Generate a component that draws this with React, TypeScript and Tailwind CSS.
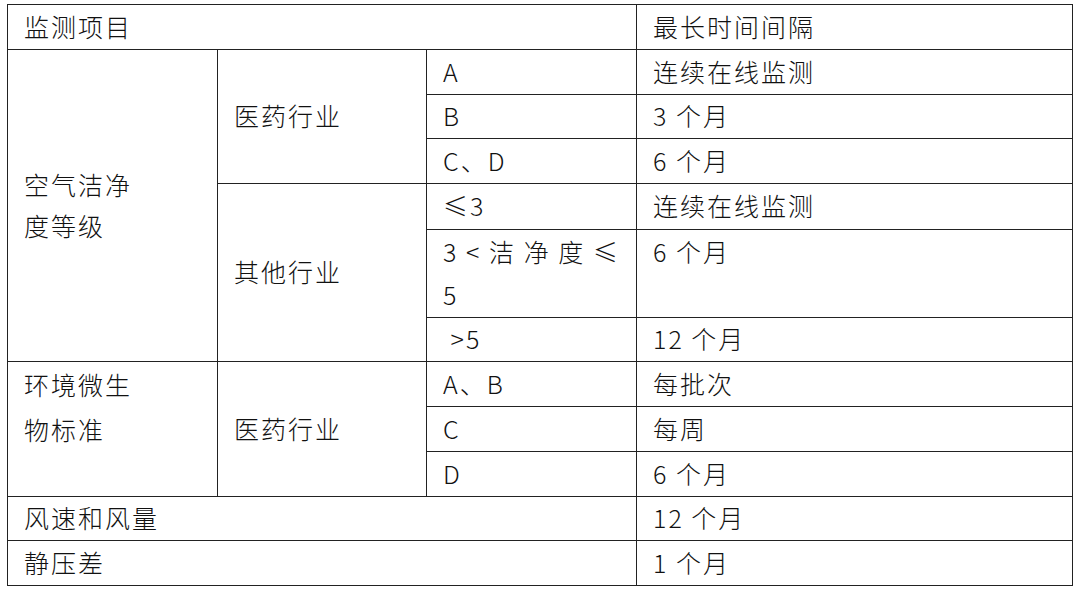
const font = { fontFamily: '"Noto Sans CJK SC", "Noto Sans", sans-serif' };

function Cell({
  className = '',
  children,
}: {
  className?: string;
  children?: React.ReactNode;
}) {
  return (
    <div className={`border-r border-b border-[#222] pl-[16px] pb-[2px] flex items-center ${className}`}>
      {children}
    </div>
  );
}

export default function App() {
  return (
    <div className="w-[1080px] h-[593px] bg-white pt-[4px] pl-[7px]" style={font}>
      <div className="grid w-max grid-cols-[210px_209px_210px_436px] grid-rows-[45px_45px_44px_45px_46px_88px_44px_45px_45px_45px_44px_45px] border-t border-l border-[#222] text-[25px] font-light tracking-[2px] text-[#111] leading-none">
        <Cell className="col-span-3">监测项目</Cell>
        <Cell>最长时间间隔</Cell>

        <Cell className="row-span-6 leading-[41px]">
          <div>
            空气洁净
            <br />
            度等级
          </div>
        </Cell>
        <Cell className="row-span-3">医药行业</Cell>
        <Cell>A</Cell>
        <Cell>连续在线监测</Cell>
        <Cell>B</Cell>
        <Cell>3 个月</Cell>
        <Cell>C、D</Cell>
        <Cell>6 个月</Cell>

        <Cell className="row-span-3">其他行业</Cell>
        <Cell>≤3</Cell>
        <Cell>连续在线监测</Cell>
        <Cell className="items-start pr-[16px] leading-[43px]">
          <div className="w-full">
            <div className="flex justify-between">
              <span>3</span>
              <span>&lt;</span>
              <span>洁</span>
              <span>净</span>
              <span>度</span>
              <span>≤</span>
            </div>
            <div>5</div>
          </div>
        </Cell>
        <Cell className="items-start leading-[43px]">6 个月</Cell>
        <Cell>&nbsp;&gt;5</Cell>
        <Cell>12 个月</Cell>

        <Cell className="row-span-3 items-start leading-[45px]">
          <div>
            环境微生
            <br />
            物标准
          </div>
        </Cell>
        <Cell className="row-span-3">医药行业</Cell>
        <Cell>A、B</Cell>
        <Cell>每批次</Cell>
        <Cell>C</Cell>
        <Cell>每周</Cell>
        <Cell>D</Cell>
        <Cell>6 个月</Cell>

        <Cell className="col-span-3">风速和风量</Cell>
        <Cell>12 个月</Cell>
        <Cell className="col-span-3">静压差</Cell>
        <Cell>1 个月</Cell>
      </div>
    </div>
  );
}
